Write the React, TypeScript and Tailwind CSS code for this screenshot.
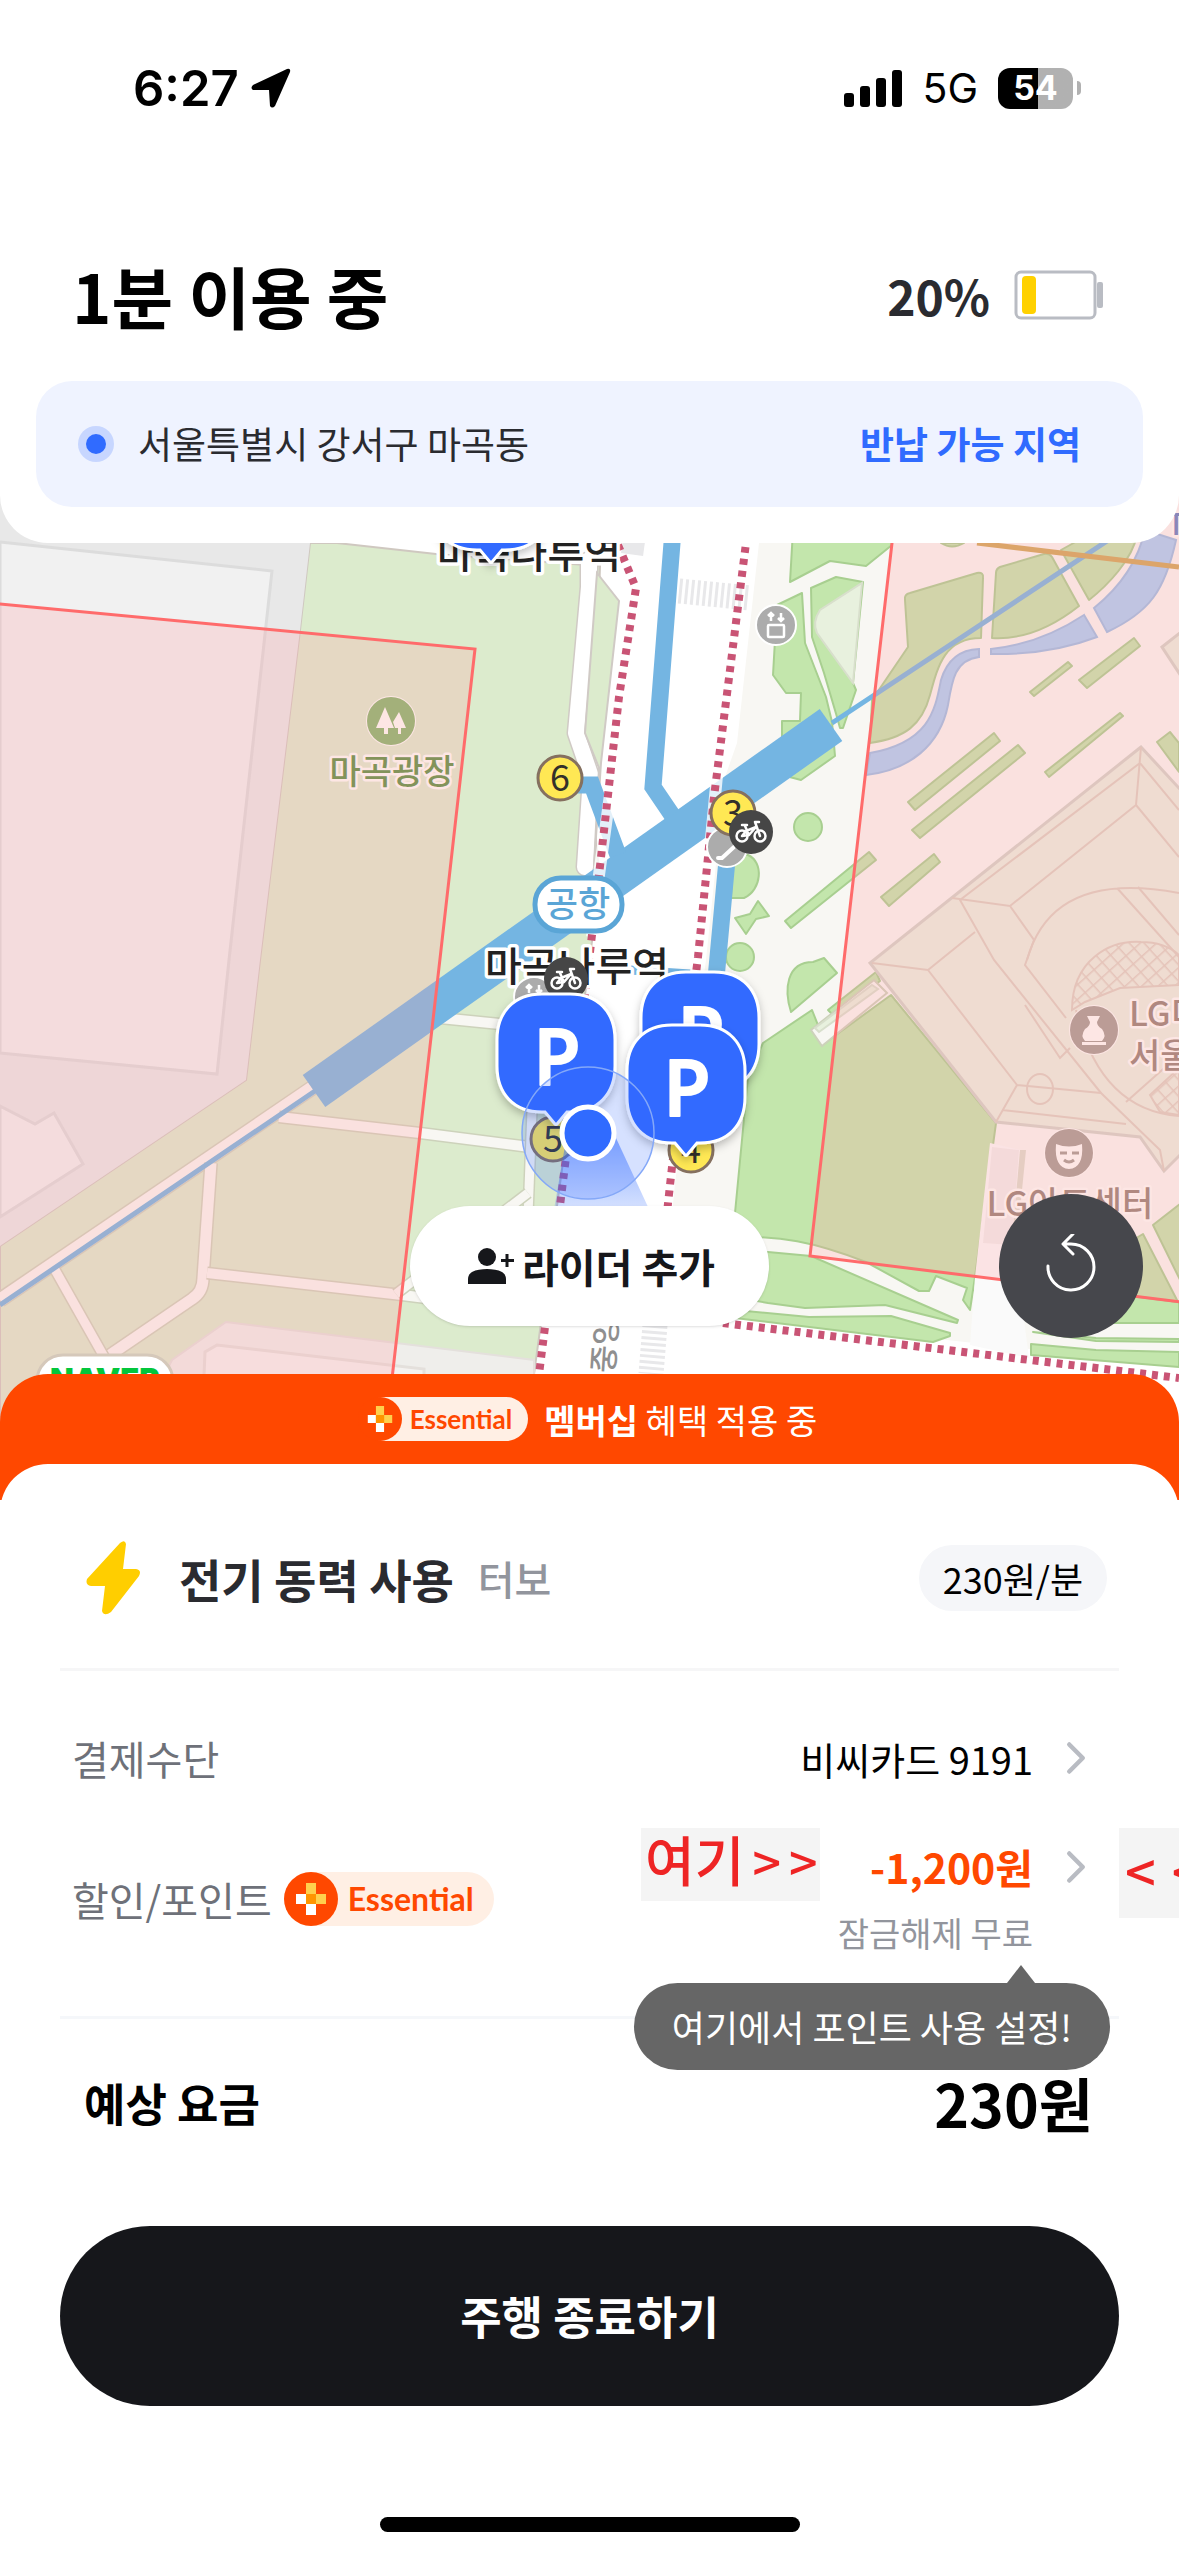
import type { ReactNode } from "react";
import { ChevronRight } from "lucide-react";

const LINE = "#74b5e2";

function Footpath({ d, w = 10 }: { d: string; w?: number }) {
  return (
    <g fill="none" strokeLinejoin="round">
      <path d={d} stroke="#cdd2bb" strokeWidth={w + 3} />
      <path d={d} stroke="#f8f7f3" strokeWidth={w} />
    </g>
  );
}

function ExitBadge({ x, y, n }: { x: number; y: number; n: string }) {
  return (
    <g>
      <circle cx={x} cy={y} r="22" fill="#ffe854" stroke="#85705f" strokeWidth="3" />
      <text x={x} y={y + 13} textAnchor="middle" fontSize="36" fill="#33302a">{n}</text>
    </g>
  );
}

function BikeBadge({ x, y }: { x: number; y: number }) {
  return (
    <g transform={`translate(${x} ${y})`} fill="none" stroke="#fff" strokeWidth="2.5" strokeLinecap="round" strokeLinejoin="round">
      <circle r="22" fill="#464646" stroke="none" />
      <circle cx="-9" cy="4" r="5.5" />
      <circle cx="9" cy="4" r="5.5" />
      <path d="M-9 4L-2 3L5-5L-5-1L-9 4M-2 3L-6-6M-9-7H-4M9 4L4-10H8" />
    </g>
  );
}

function LiftBadge({ x, y }: { x: number; y: number }) {
  return (
    <g transform={`translate(${x} ${y})`} fill="none" stroke="#fff" strokeWidth="2.5">
      <circle r="20" fill="#acacac" strokeWidth="2" />
      <rect x="-8" y="0" width="16" height="12" rx="1" />
      <path d="M-5-4V-12M-8-9L-5-12L-2-9M5-12V-4M2-7L5-4L8-7" />
    </g>
  );
}

function ParkingPin({ x, y }: { x: number; y: number }) {
  return (
    <g transform={`translate(${x} ${y})`}>
      <path
        d="M-14 0H14C42 0 59 18 59 46V72C59 100 42 118 14 118H11L1 130Q0 131-1 130L-11 118H-14C-42 118-59 100-59 72V46C-59 18-42 0-14 0Z"
        fill="#306bff"
        stroke="#fff"
        strokeWidth="3"
        filter="url(#pin-shadow)"
      />
      <text x="1" y="91" textAnchor="middle" fontSize="77" fontWeight="600" fill="#fff" stroke="#fff" strokeWidth="2" strokeLinejoin="round" fontFamily="'Open Sans', sans-serif">P</text>
    </g>
  );
}

function MapView() {
  return (
    <svg
      className="absolute inset-0 size-full font-['Noto_Sans_CJK_KR',sans-serif]"
      viewBox="0 495 1179 927"
      preserveAspectRatio="xMidYMid slice"
      role="img"
      aria-label="마곡나루역 주변 지도"
    >
      <defs>
        <filter id="pin-shadow" x="-20%" y="-20%" width="140%" height="150%">
          <feDropShadow dx="0" dy="4" stdDeviation="4" floodColor="#000" floodOpacity="0.25" />
        </filter>
        <linearGradient id="heading" x1="0" y1="0" x2="0" y2="1">
          <stop offset="0" stopColor="#306bff" stopOpacity="0.55" />
          <stop offset="1" stopColor="#306bff" stopOpacity="0" />
        </linearGradient>
        <pattern id="grid" width="11" height="11" patternUnits="userSpaceOnUse" patternTransform="rotate(48)">
          <path d="M0 0H11M0 0V11" stroke="#dccfc0" strokeWidth="3" />
        </pattern>
      </defs>

      {/* Ground */}
      <rect y="495" width="1179" height="927" fill="#fff" />
      <path d="M310 543L337 543L436 554L600 566L592 800L600 880L566 1140L534 1374L528 1422H0V1246L246 1080L260 960L300 630Z" fill="#dcebcd" stroke="#cfc8c0" strokeWidth="2" />
      <path d="M0 495H315L310 543L300 630L260 960L246 1080L0 1246Z" fill="#e8e8e8" />
      <path d="M0 542L272 571L229 960L217 1074L0 1053ZM0 1106L35 1124L54 1113L83 1164L0 1217Z" fill="#f1f1f1" stroke="#dcdcdc" strokeWidth="3" />
      <path d="M226 1322L534 1360V1422H140L172 1360Z" fill="#efeeeb" stroke="#e4e0dc" strokeWidth="2" />
      <path d="M202 1422L205 1352L217 1345L424 1369V1422Z" fill="#f4f2f0" stroke="#e4e0dc" strokeWidth="3" />
      <path d="M762 495L759 543L737 743L725 777L706 960L675 1183L664 1300L733 1317L1179 1365V495Z" fill="#f8f7f3" />

      {/* Footpaths of the square */}
      <Footpath d="M312 1088L0 1300" w={13} />
      <Footpath d="M279 1117L420 1133L530 1147" />
      <Footpath d="M532 1110L528 1215" w={9} />
      <Footpath d="M440 1018L510 1025" />
      <Footpath d="M211 1163L203 1278Q203 1292 192 1299L107 1357" w={11} />
      <Footpath d="M54 1268L107 1362V1400" w={9} />
      <Footpath d="M207 1273L402 1295L450 1301" />
      <Footpath d="M396 1294L528 1193" w={9} />
      <g fill="none" strokeLinejoin="round">
        <path d="M589 560V587L576 733L591 777L585 867" stroke="#d0cac5" strokeWidth="19" strokeLinecap="round" />
        <path d="M589 560V587L576 733L591 777L585 867" stroke="#fff" strokeWidth="16" strokeLinecap="round" />
      </g>
      <path d="M597 573L619 601L601 763L594 866L599 768L585 733Z" fill="#dcebcd" stroke="#d0cac5" strokeWidth="2" />

      {/* Crossings */}
      <g stroke="#e8e8ea" strokeDasharray="3 3">
        <path d="M679 591L750 598" strokeWidth="25" />
        <path d="M622 546L644 549" strokeWidth="14" strokeDasharray="0" />
        <path d="M655 1325L651 1374" strokeWidth="25" />
      </g>

      {/* Planting */}
      <g fill="#c3e6ac" stroke="#a8cf90" strokeWidth="2" strokeLinejoin="round">
        <path d="M793 530L790 582L830 561L866 566L892 545V530Z" />
        <path d="M802 593L777 605L773 675L786 693H801L800 721H782V775L801 780L835 756L832 722L826 697L805 643Z" />
        <path d="M811 588L836 577L863 582L853 683L856 690L843 728H840L837 717L824 673L812 637Z" />
        <circle cx="808" cy="827" r="14" />
        <path d="M733 855H748C764 862 762 890 744 898H731Z" />
        <path d="M758 901L769 916L756 919L746 934L735 918L750 914Z" />
        <circle cx="740" cy="957" r="14" />
        <path d="M785 921L791 928L876 860L869 852Z" />
        <path d="M824 958L837 973L791 1012C784 990 786 962 813 962Z" />
        <path d="M812 1010L763 1043L748 1077L735 1213V1237C780 1236 812 1241 866 1262L919 1291L929 1291L936 1276L967 1288L963 1300L970 1310L975 1277L996 1123L891 995L825 1043Z" />
        <path d="M876 972L828 1010L834 1016L880 981Z" />
        <path d="M740 1252H768L811 1256L958 1320L957 1323L885 1305L805 1308L768 1303L740 1298Z" />
        <path d="M735 1310L809 1317L891 1316L950 1333V1336L933 1342L735 1318Z" />
        <path d="M1080 1290L1179 1302V1323H1080ZM1031 1344L1096 1350L1179 1352V1367L1031 1355Z" />
        <path d="M1033 1332L1096 1338L1179 1339V1342L1096 1341Z" />
        <path d="M905 600Q904 594 910 593L977 573Q984 572 983 578L981 638C945 638 938 665 930 695C922 725 905 738 870 743L872 700L908 647Z" />
        <path d="M996 573Q996 569 1000 567L1044 554Q1049 553 1052 557L1079 606C1055 625 1025 640 992 638Z" />
        <path d="M1061 550L1088 535H1137C1132 560 1108 585 1089 600Z" />
        <path d="M941 543Q952 550 964 543Z" />
        <path d="M908 802L915 810L1000 741L994 733ZM912 830L920 838L1025 753L1018 745ZM1030 692L1034 696L1072 666L1068 662Z" />
        <path d="M1079 680L1087 688L1140 646L1134 638ZM1045 772L1049 777L1123 716L1120 713ZM1157 742L1170 732L1179 743V772ZM881 897L889 906L940 862L934 854Z" />
        <path d="M1153 1225L1185 1200V1290ZM1138 1237L1143 1234L1178 1302L1090 1290Z" />
      </g>
      <path d="M862 583L853 683L817 633Q812 622 820 610Z" fill="#e8f1de" stroke="#d8dfcc" strokeWidth="2" />
      <path d="M874 980L887 993L822 1046L811 1030Z" fill="#f8f7f3" stroke="#cdd2bb" strokeWidth="2" />
      <path d="M872 985L878 989L819 1032L815 1028Z" fill="#e8f1de" stroke="#d8dfcc" strokeWidth="2" />
      <path d="M990 1143L1020 1150L1014 1243L1029 1358L970 1345L975 1277Z" fill="#fafafa" />
      <path d="M992 1147L1019 1150L1012 1245L983 1243Z" fill="#f1eeec" />
      <path d="M1020 1150H1026L1018 1230H1013Z" fill="#dcdccc" />

      {/* Stream */}
      <g fill="#abd0f6" stroke="#9abfe6" strokeWidth="2">
        <path d="M870 753C930 742 935 710 941 680Q950 650 979 649V657C955 660 952 680 948 705C940 745 910 770 866 775Z" />
        <path d="M991 649Q1040 644 1084 615L1097 637Q1050 655 991 654Z" />
        <path d="M1094 608Q1135 575 1145 530L1176 540C1165 590 1150 612 1107 632Z" />
      </g>

      {/* Arts centre */}
      <path d="M1141 747L870 963L996 1122L1140 1137L1164 1171L1190 1145V800ZM1162 647L1190 625V690Z" fill="#eaf0e0" stroke="#d3d3c8" strokeWidth="3" />
      <g fill="none" stroke="#dccfc0" strokeWidth="2">
        <path d="M1141 747L1136 805L1010 906L952 898M1136 805L1179 857M1179 810L1140 763L960 900L994 960L1101 1093M1010 906L1034 940L1025 965L1066 1018" />
        <path d="M1027 960C1045 895 1100 878 1179 893M1117 888L1179 957M1138 887L1179 935M975 932L928 970L872 963M928 970L1017 1085L996 1122M1017 1085L1101 1093L1160 1150L1164 1171M1002 1110L1126 1124" />
        <path d="M1076 1010Q1100 1110 1179 1116M1025 1005L1060 1058L1070 1048M1126 1102L1179 1055" />
        <ellipse cx="1040" cy="1089" rx="13" ry="15" />
      </g>
      <path d="M1072 1010C1072 960 1110 940 1141 942Q1165 942 1179 955V985L1120 988L1085 1002ZM1150 1095L1179 1068V1115L1160 1112Z" fill="url(#grid)" stroke="#dccfc0" strokeWidth="2" />

      {/* Airport line and passages */}
      <g fill="none" stroke={LINE}>
        <path d="M832 723L1160 506M315 1091L0 1305" strokeWidth="5" />
        <path d="M831 725L314 1091" strokeWidth="39" />
        <path d="M673 520L672 543L653 787L672 815M575 785H592L618 855M727 860L714 1000" strokeWidth="17" />
        <path d="M600 968L690 974" strokeWidth="9" />
      </g>
      <path d="M977 543L1179 567" stroke="#d0a656" strokeWidth="5" />

      {/* Station platforms */}
      <g fill="none">
        <g stroke="#fff" strokeOpacity="0.8" strokeWidth="12">
          <path d="M623 700L599 875L592 937" />
          <path d="M718 765L708 870" />
        </g>
        <g stroke="#c95475" strokeWidth="8" strokeDasharray="6 6">
          <path d="M618 545L636 588L619 697L599 875L566 1157L545 1327L537 1390" />
          <path d="M747 535L714 797L698 957L672 1167L664 1240" />
          <path d="M723 1323L1179 1378" />
        </g>
      </g>

      {/* No-return zones */}
      <g fill="#ffa4a6" fillOpacity="0.26" stroke="#ff6b6b" strokeWidth="3">
        <path d="M-10 603L475 649L441 950L385 1440H-10Z" />
        <path d="M897 490L892 543L844 960L810 1256L1190 1303V490Z" />
      </g>

      {/* Place labels */}
      <g fontSize="34" fontWeight="500" paintOrder="stroke" strokeWidth="5" strokeLinejoin="round">
        <circle cx="391" cy="721" r="24" fill="#a3b07a" stroke="#fde6e4" strokeWidth="2" />
        <path d="M385 707L394 728H388V734H384V728H376ZM399 712L406 728H401V734H398V728H395L393 722Z" fill="#fde6e4" stroke="none" />
        <text x="392" y="784" textAnchor="middle" fill="#83935a" stroke="#fde6e4">마곡광장</text>
        <circle cx="1094" cy="1030" r="24" fill="#bb9c96" stroke="#fde6e4" strokeWidth="2" />
        <path d="M1087 1016H1100L1097 1022Q1097 1026 1102 1029Q1107 1036 1102 1041H1085Q1080 1036 1085 1029Q1090 1026 1090 1022ZM1082 1042H1106V1045H1082Z" fill="#fde6e4" stroke="none" />
        <text x="1129" y="1026" fill="#b08880" stroke="#fde6e4">LG디</text>
        <text x="1129" y="1068" fill="#b08880" stroke="#fde6e4">서울</text>
        <circle cx="1069" cy="1153" r="24" fill="#bb9c96" stroke="#fde6e4" strokeWidth="2" />
        <path d="M1056 1144Q1069 1149 1082 1144Q1084 1168 1069 1169Q1054 1168 1056 1144Z" fill="#fde6e4" stroke="none" />
        <path d="M1060 1153H1067M1072 1153H1079M1064 1160Q1069 1164 1074 1160" fill="none" stroke="#bb9c96" strokeWidth="3" />
        <text x="1070" y="1216" textAnchor="middle" fill="#b08880" stroke="#fde6e4">LG아트센터</text>
        <text x="1167" y="535" fontSize="30" fill="#8a86b8" stroke="#fde6e4">T</text>
        <text transform="translate(602 1428) rotate(-86)" x="0" y="8" fontSize="30" fill="#8f8f8f" stroke="#fff">마곡중앙로</text>
      </g>
      <rect x="37" y="1355" width="136" height="60" rx="26" fill="#fff" stroke="#d5c8ba" strokeWidth="3" />
      <text x="105" y="1391" textAnchor="middle" fontSize="31" fontWeight="900" fill="#03c63c" fontFamily="Inter, sans-serif">NAVER</text>

      {/* Station */}
      <g fontSize="40" fontWeight="500" fill="#222" stroke="#fff" strokeWidth="7" strokeLinejoin="round" paintOrder="stroke">
        <text x="529" y="568" textAnchor="middle">마곡나루역</text>
        <text x="577" y="981" textAnchor="middle">마곡나루역</text>
      </g>
      <rect x="535" y="878" width="87" height="53" rx="26" fill="#fff" stroke="#5aa5d6" strokeWidth="5" />
      <text x="578" y="917" textAnchor="middle" fontSize="35" fontWeight="500" fill="#5aa5d6">공항</text>
      <LiftBadge x={776} y={625} />
      <LiftBadge x={534} y={997} />
      <circle cx="727" cy="847" r="20" fill="#acacac" stroke="#fff" strokeWidth="2" />
      <path d="M718 858H722L735 846H739" fill="none" stroke="#fff" strokeWidth="4" strokeLinecap="round" />
      <ExitBadge x={560} y={778} n="6" />
      <ExitBadge x={733} y={813} n="3" />
      <ExitBadge x={691} y={1150} n="4" />
      <ExitBadge x={553} y={1139} n="5" />
      <BikeBadge x={751} y={832} />
      <BikeBadge x={566} y={979} />

      <ParkingPin x={491} y={432} />
      <ParkingPin x={700} y={972} />
      <ParkingPin x={556} y={994} />
      <ParkingPin x={686} y={1025} />

      {/* Current position */}
      <path d="M566 1140L616 1138L668 1250H547Z" fill="url(#heading)" />
      <circle cx="588" cy="1133" r="66" fill="#306bff" fillOpacity="0.2" stroke="#84a8f8" strokeWidth="1.5" />
      <circle cx="588" cy="1133" r="26" fill="#306bff" stroke="#fff" strokeWidth="5" />
    </svg>
  );
}

function StatusBar() {
  return (
    <div className="flex h-44 items-center justify-between pr-[98px] pl-[133px] font-['Inter',sans-serif]">
      <div className="flex items-center gap-3 text-[49px] leading-none font-semibold">
        6:27
        <svg className="size-10" viewBox="0 0 40 40" aria-hidden="true">
          <path d="M39 4Q40 0 36 1L2 17Q-1 20 2 22L18 22L19 38Q21 41 24 38Z" />
        </svg>
      </div>
      <div className="flex items-center">
        <svg className="mr-5 h-[37px] w-[58px]" viewBox="0 0 58 37" aria-hidden="true">
          <rect y="23" width="10" height="14" rx="3" />
          <rect x="16" y="16" width="10" height="21" rx="3" />
          <rect x="32" y="8" width="10" height="29" rx="3" />
          <rect x="48" width="10" height="37" rx="3" />
        </svg>
        <span className="mr-5 text-[41px] leading-none">5G</span>
        <span className="flex h-[41px] w-[75px] items-center justify-center rounded-xl bg-linear-to-r from-black from-54% to-[#b1b1b1] to-54% text-[34px] leading-none font-bold text-white">54</span>
        <span className="ml-1 h-3.5 w-1 rounded-r-full bg-[#b1b1b1]" />
      </div>
    </div>
  );
}

function EssentialBadge({ small = false }: { small?: boolean }) {
  return (
    <span
      className={`flex items-center rounded-full bg-[#ffefe4] font-['Lato',sans-serif] leading-none font-bold text-[#ff4800] ${
        small ? "h-11 pr-4 text-[26px]" : "h-[54px] pr-5 text-[32px]"
      }`}
    >
      <svg className={small ? "mr-2 size-11 -ml-1 rounded-full" : "mr-2.5 size-[54px] rounded-full"} viewBox="0 0 54 54" aria-hidden="true">
        <rect width="54" height="54" fill="#ff4800" />
        <path d="M12 22H22V32H12ZM22 32H32V43H22Z" fill="#fff" />
        <path d="M22 11H32V22H42V32H32V22H22Z" fill="#ffd04d" />
        <path d="M22 22H32V32H22Z" fill="#ff9500" />
      </svg>
      Essential
    </span>
  );
}

function Sticker({ className, children }: { className: string; children: ReactNode }) {
  return <span className={`absolute flex overflow-hidden bg-[#f4f4f4] font-medium whitespace-nowrap text-[#ee2424] ${className}`}>{children}</span>;
}

export default function App() {
  return (
    <div className="flex min-h-screen flex-col overflow-hidden bg-white font-['Noto_Sans_CJK_KR',sans-serif] text-black">
      <header className="relative z-10 rounded-b-[48px] bg-white pb-9">
        <StatusBar />
        <div className="flex h-[205px] items-center justify-between pt-8 pr-[75px] pl-[72px]">
          <h1 className="text-[67px] leading-none font-bold">1분 이용 중</h1>
          <div className="flex items-center gap-6 text-[48px] leading-none font-bold text-[#2a2b30]">
            20%
            <svg className="h-[50px] w-[90px]" viewBox="0 0 90 50" aria-hidden="true">
              <rect x="2" y="2" width="79" height="46" rx="5" fill="#fff" stroke="#b9bcc3" strokeWidth="3" />
              <rect x="83" y="12" width="6" height="26" rx="2" fill="#b9bcc3" />
              <rect x="8" y="6" width="14" height="38" rx="4" fill="#ffd100" />
            </svg>
          </div>
        </div>
        <div className="mx-9 flex h-[126px] items-center rounded-[36px] bg-[#eff3ff] pr-[62px] pl-[42px] text-[37px]">
          <span className="mr-6 flex size-9 items-center justify-center rounded-full bg-[#c7d6ff]">
            <span className="size-5 rounded-full bg-[#306bff]" />
          </span>
          <span className="text-[#2a2b30]">서울특별시 강서구 마곡동</span>
          <strong className="ml-auto font-bold text-[#306bff]">반납 가능 지역</strong>
        </div>
      </header>

      <section className="relative -my-12 flex-1">
        <MapView />
        <div className="absolute inset-x-0 bottom-24 flex justify-center">
          <button type="button" className="flex h-[120px] items-center gap-2 rounded-full bg-white pr-[54px] pl-[58px] text-[40px] font-bold text-[#16171b] shadow-sm">
            <svg className="h-[38px] w-[46px]" viewBox="0 0 46 38" aria-hidden="true">
              <circle cx="19" cy="10" r="9" fill="#16171b" />
              <path d="M0 37V32C0 24 10 22 19 22S38 24 38 32V37Z" fill="#16171b" />
              <path d="M39 7V20M33 13.5H46" stroke="#16171b" strokeWidth="3" />
            </svg>
            라이더 추가
          </button>
        </div>
        <button type="button" aria-label="새로고침" className="absolute right-9 bottom-[84px] flex size-36 items-center justify-center rounded-full bg-[#46474c]">
          <svg className="size-16" viewBox="0 0 64 64" fill="none" stroke="#fff" strokeWidth="3" strokeLinecap="round" strokeLinejoin="round" aria-hidden="true">
            <path d="M9 32A23 23 0 1 0 32 10H25M34 0L24 10L34 20" />
          </svg>
        </button>
      </section>

      <div className="relative z-10">
        <div className="flex h-[126px] items-center justify-center gap-4 rounded-t-[48px] bg-[#ff4800] pb-9 text-[34px] text-white">
          <EssentialBadge small />
          <p>
            <strong className="font-bold">멤버십</strong> 혜택 적용 중
          </p>
        </div>

        <main className="relative -mt-9 rounded-t-[48px] bg-white px-[60px]">
          <div className="flex h-[207px] items-center border-b-3 border-[#f6f6f7] pt-6 pr-3 pl-[26px]">
            <svg className="mr-[38px] h-[74px] w-[55px]" viewBox="0 0 55 74" aria-hidden="true">
              <path d="M34 2Q39-2 40 3L37 28H50Q56 29 53 35L25 71Q18 76 16 70L19 45H5Q-1 44 1 38Z" fill="#ffce00" />
            </svg>
            <h2 className="text-[46px] font-bold text-[#2a2b30]">전기 동력 사용</h2>
            <span className="ml-6 text-[40px] font-medium text-[#92959d]">터보</span>
            <span className="ml-auto flex h-[66px] items-center rounded-full bg-[#f5f6f9] px-6 text-[36px]">230원/분</span>
          </div>

          <div className="relative border-b-3 border-[#f5f7fa] pt-[54px] pr-4 pb-[51px] pl-3 text-[40px]">
            <div className="flex h-[66px] items-center justify-between">
              <span className="text-[#6e7179]">결제수단</span>
              <button type="button" className="flex items-center gap-4 text-[38px]">
                비씨카드 9191
                <ChevronRight className="size-[54px] text-[#b9bcc3]" />
              </button>
            </div>
            <div className="mt-[42px] flex items-center justify-between">
              <div className="flex items-center gap-3">
                <span className="text-[#6e7179]">할인/포인트</span>
                <EssentialBadge />
              </div>
              <div className="flex flex-col items-end">
                <button type="button" className="flex h-[68px] items-center gap-4 text-[41px] font-bold text-[#ff4800]">
                  -1,200원
                  <ChevronRight className="size-[54px] text-[#b9bcc3]" />
                </button>
                <p className="h-16 pr-[70px] text-[34px] leading-[64px] text-[#92959d]">잠금해제 무료</p>
              </div>
            </div>

            <Sticker className="top-[157px] right-[299px] h-[73px] w-[179px] items-baseline gap-2 pl-1 text-[54px] leading-[62px]">
              <span>여기</span>
              <span className="text-[50px]">&gt;</span>
              <span className="text-[50px]">&gt;</span>
            </Sticker>
            <Sticker className="top-[157px] -right-[60px] h-[90px] w-[60px] gap-4 pl-1.5 text-[54px] leading-[84px]">
              <span>&lt;</span>
              <span>&lt;</span>
            </Sticker>
            <div role="tooltip" className="absolute right-[9px] -bottom-[54px] rounded-full bg-[#666] px-[38px] text-[36px] leading-[87px] text-white">
              여기에서 포인트 사용 설정!
              <span className="absolute -top-[18px] right-[75px] h-[18px] w-7 bg-[#666] [clip-path:polygon(50%_0,100%_100%,0_100%)]" />
            </div>
          </div>

          <div className="flex h-[168px] items-center justify-between pr-[26px] pl-6 font-bold">
            <span className="text-[45px]">예상 요금</span>
            <span className="text-[59px]">230원</span>
          </div>

          <button type="button" className="mt-[39px] h-[180px] w-full rounded-full bg-[#16171b] text-[45px] font-bold text-white">
            주행 종료하기
          </button>
        </main>
        <div className="flex justify-center bg-white pt-[111px] pb-6">
          <div className="h-[15px] w-[420px] rounded-full bg-black" />
        </div>
      </div>
    </div>
  );
}
